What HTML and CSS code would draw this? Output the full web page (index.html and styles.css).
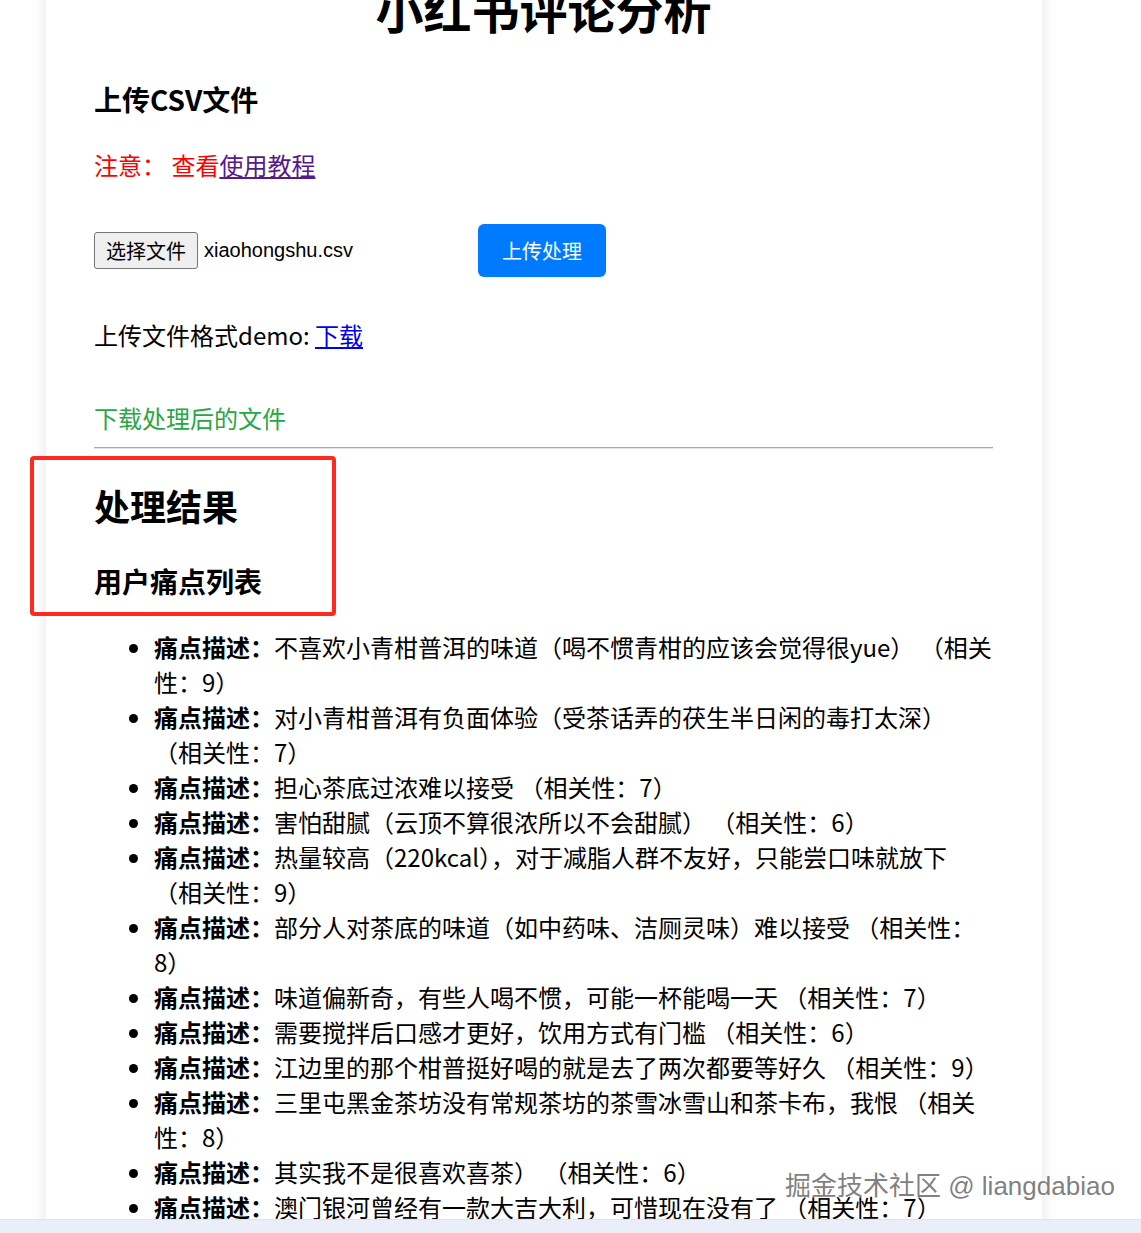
FILE: index.html
```html
<!DOCTYPE html>
<html lang="zh-CN">
  <head>
    <meta charset="UTF-8" />
    <meta name="viewport" content="width=device-width, initial-scale=1.0" />
    <title>小红书评论分析</title>
    <link rel="stylesheet" href="styles.css">
  </head>
  <body>
    <div class="container">
      <h1>小红书评论分析</h1>

      <h3>上传CSV文件</h3>
      <p class="notice">注意： 查看<a href="#" class="visited">使用教程</a></p>

      <form class="upload-form">
        <div class="file-input">
          <span class="file-btn">选择文件</span>
          <span class="file-name">xiaohongshu.csv</span>
        </div>
        <button type="button" class="upload-btn">上传处理</button>
      </form>

      <p class="demo">上传文件格式demo: <a href="#">下载</a></p>
      <p class="download">下载处理后的文件</p>
      <hr />

      <h2>处理结果</h2>
      <h3>用户痛点列表</h3>
      <ul class="pain-list">
        <li><strong>痛点描述：</strong>不喜欢小青柑普洱的味道（喝不惯青柑的应该会觉得很yue） （相关性：9）</li>
        <li><strong>痛点描述：</strong>对小青柑普洱有负面体验（受茶话弄的茯生半日闲的毒打太深） （相关性：7）</li>
        <li><strong>痛点描述：</strong>担心茶底过浓难以接受 （相关性：7）</li>
        <li><strong>痛点描述：</strong>害怕甜腻（云顶不算很浓所以不会甜腻） （相关性：6）</li>
        <li><strong>痛点描述：</strong>热量较高（220kcal），对于减脂人群不友好，只能尝口味就放下 （相关性：9）</li>
        <li><strong>痛点描述：</strong>部分人对茶底的味道（如中药味、洁厕灵味）难以接受 （相关性：8）</li>
        <li><strong>痛点描述：</strong>味道偏新奇，有些人喝不惯，可能一杯能喝一天 （相关性：7）</li>
        <li><strong>痛点描述：</strong>需要搅拌后口感才更好，饮用方式有门槛 （相关性：6）</li>
        <li><strong>痛点描述：</strong>江边里的那个柑普挺好喝的就是去了两次都要等好久 （相关性：9）</li>
        <li><strong>痛点描述：</strong>三里屯黑金茶坊没有常规茶坊的茶雪冰雪山和茶卡布，我恨 （相关性：8）</li>
        <li><strong>痛点描述：</strong>其实我不是很喜欢喜茶） （相关性：6）</li>
        <li><strong>痛点描述：</strong>澳门银河曾经有一款大吉大利，可惜现在没有了 （相关性：7）</li>
      </ul>
    </div>

    <!-- 标注框 -->
    <div class="mark-box"></div>
    <div class="watermark">掘金技术社区 @ liangdabiao</div>
    <div class="bottom-bar"></div>
  </body>
</html>
```

FILE: styles.css
```css
body {
  font-family: "Noto Sans CJK SC", sans-serif;
  font-size: 24px;
  background-color: #fff;
  color: #000;
  margin: 0;
  padding: 0;
  overflow: hidden;
}
.container {
  width: 899px;
  min-height: 1300px;
  margin-left: 46px;
  padding: 0 49px 0 48px;
  background-color: #fff;
  box-shadow: 0 0 15px rgba(0, 0, 0, 0.1);
}
h1 {
  font-size: 48px;
  text-align: center;
  margin: -27px 0 36px;
}
h2 {
  font-size: 36px;
  margin: 30px 0 30px;
}
h3 {
  font-size: 28px;
  margin: 28px 0;
}
p {
  margin: 24px 0;
}
a {
  color: #0000ee;
}
a.visited {
  color: #551a8b;
}
.notice {
  color: red;
}
.upload-form {
  display: flex;
  align-items: center;
  margin: 42px 0 40px;
}
.file-input {
  width: 372px;
  display: flex;
  align-items: center;
  gap: 6px;
  font-family: "Liberation Sans", "Noto Sans CJK SC", sans-serif;
  font-size: 20px;
}
.file-btn {
  display: inline-flex;
  align-items: center;
  justify-content: center;
  width: 104px;
  height: 37px;
  box-sizing: border-box;
  border: 1px solid #767676;
  border-radius: 3px;
  background-color: #efefef;
  font-family: "Noto Sans CJK SC", sans-serif;
}
.upload-btn {
  margin-left: 12px;
  padding: 12px 24px;
  border: none;
  border-radius: 6px;
  background-color: #007bff;
  color: #fff;
  font-family: "Noto Sans CJK SC", sans-serif;
  font-size: 20px;
}
.demo {
  margin: 40px 0 48px;
}
.download {
  color: #28a745;
  margin: 48px 0 12px;
}
hr {
  border: 0;
  border-top: 1px solid #a9a9a9;
  border-bottom: 1px solid #e4e4e4;
  margin: 0;
}
.pain-list {
  margin: 28px 0 0;
  padding-left: 60px;
}
.pain-list strong {
  font-weight: bold;
}
.mark-box {
  position: absolute;
  left: 30px;
  top: 456px;
  width: 306px;
  height: 160px;
  box-sizing: border-box;
  border: 4px solid #ff2a1f;
  border-radius: 4px;
}
.watermark {
  position: absolute;
  left: 785px;
  top: 1165px;
  font-family: "Liberation Sans", "Noto Sans CJK SC", sans-serif;
  font-size: 26px;
  color: rgba(105, 105, 105, 0.85);
  text-shadow: 0 0 2px #fff, 0 0 2px #fff;
  white-space: nowrap;
}
.bottom-bar {
  position: fixed;
  left: 0;
  right: 0;
  bottom: 0;
  height: 13px;
  background-color: #e9eef8;
  border-top: 1px solid #dde4f0;
}
```
